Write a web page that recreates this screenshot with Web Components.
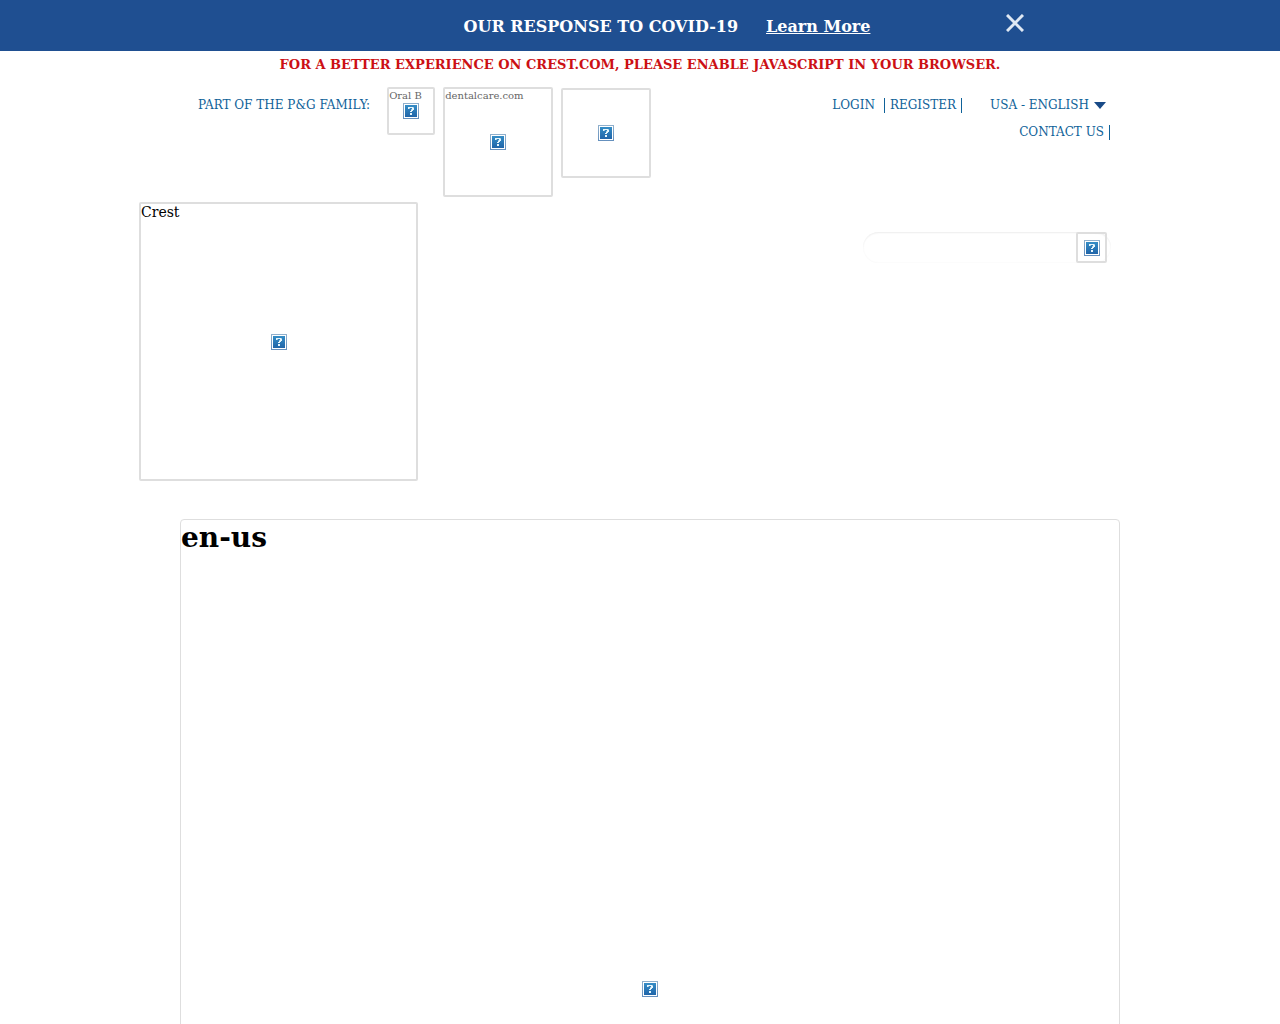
<!DOCTYPE html>
<html lang="en-US">
<head>
<meta charset="utf-8">
<meta name="viewport" content="width=device-width, initial-scale=1">
<title>Crest</title>
<style>
body { margin: 0; background: #fff; color: #000; font-family: "DejaVu Serif", serif; }
</style>
</head>
<body>
<crest-page></crest-page>
<script>
const define = (name, html) => {
  const template = document.createElement('template');
  template.innerHTML = html;
  customElements.define(name, class extends HTMLElement {
    constructor() {
      super();
      this.attachShadow({ mode: 'open' }).append(template.content.cloneNode(true));
    }
  });
};

/* Bordered image frame with a question-mark icon at its centre. */
define('image-frame', `
<style>
:host { display: grid; box-sizing: border-box; width: var(--size, 90px); aspect-ratio: 1; border: 2px solid #dedede; border-radius: 2px; font-size: 10px; line-height: 14px; color: #666; }
.alt, svg { grid-area: 1 / 1; }
.alt { justify-self: start; align-self: start; white-space: nowrap; }
svg { place-self: center; width: 16px; height: 16px; }
</style>
<span class="alt"><slot></slot></span>
<svg viewBox="0 0 16 16" aria-hidden="true">
  <defs><linearGradient id="g" x1="0" y1="0" x2="0" y2="1"><stop stop-color="#358dc6"/><stop offset="1" stop-color="#2065a9"/></linearGradient>
  <linearGradient id="b" x1="0" y1="0" x2="0" y2="1"><stop stop-color="#91b1cd"/><stop offset="1" stop-color="#648fbd"/></linearGradient></defs>
  <rect width="16" height="16" fill="url(#b)"/><rect x="1" y="1" width="14" height="14" fill="#fff"/><rect x="2" y="2" width="12" height="12" fill="url(#g)"/>
  <path d="M5 4H6V6H5ZM6 4H10V5H6ZM9 5H11V7H9ZM8 7H10V8H8ZM7 8H9V9H7ZM7 10H9V12H7Z" fill="#e6f5fb"/>
  <path d="M6 5H7V6H6ZM8 6H9V7H8ZM10 4H11V5H10Z" fill="#9fcae3"/>
</svg>`);

define('notice-bar', `
<style>
:host { display: block; background: #1f4f91; color: #fff; font-weight: bold; font-size: 16px; line-height: 21px; }
.row { display: grid; grid-template-columns: 1fr auto 1fr; max-width: 768px; margin: 0 auto; align-items: start; padding: 14px 0 16px; }
.message { grid-column: 2; display: flex; gap: 28px; padding: 2px 0 0 54px; margin-bottom: -2px; }
p { margin: 0; white-space: nowrap; }
a { color: inherit; white-space: nowrap; }
button { display: block; justify-self: end; padding: 0; border: 0; background: none; width: 18px; height: 18px; color: #dfe8f3; }
svg { display: block; }
</style>
<div class="row"><div class="message"><p>OUR RESPONSE TO COVID-19</p><a href="#covid">Learn More</a></div>
<button aria-label="Close"><svg width="18" height="18" viewBox="0 0 18 18"><path d="M1 1L17 17M17 1L1 17" stroke="currentColor" stroke-width="3" fill="none"/></svg></button></div>`);

define('script-warning', `
<style>
:host { display: block; padding: 5px 0 6px; text-align: center; color: #cc1014; font-weight: bold; font-size: 13px; line-height: 17px; }
</style>
<slot></slot>`);

define('brand-family', `
<style>
:host { display: flex; align-items: flex-start; gap: 8px; color: #0f6299; }
p { margin: 17px 9px 0 0; font-size: 12px; line-height: 18px; white-space: nowrap; }
a { display: block; margin-top: 8px; text-decoration: none; }
.parent { margin-top: 9px; }
</style>
<p>PART OF THE P&amp;G FAMILY:</p>
<a href="#oralb"><image-frame style="--size:48px">Oral B</image-frame></a>
<a href="#dentalcare"><image-frame style="--size:110px">dentalcare.com</image-frame></a>
<a class="parent" href="#pg" aria-label="P&amp;G"><image-frame style="--size:90px"></image-frame></a>`);

define('account-links', `
<style>
:host { display: flex; flex-direction: column; align-items: flex-end; gap: 12px; font-size: 12px; line-height: 15px; color: #0f6299; }
.row { display: flex; }
a, button { display: block; font: inherit; color: inherit; text-decoration: none; white-space: nowrap; padding: 0; border: 0; background: none; }
.bar { border-right: 1px solid #0f6299; padding-right: 5px; }
.login { padding-right: 9px; }
.register { padding-left: 5px; }
.locale { display: flex; align-items: center; gap: 5px; margin: 0 4px 0 28px; }
svg { display: block; }
</style>
<div class="row"><a class="bar login" href="#login">LOGIN</a><a class="bar register" href="#register">REGISTER</a>
<button class="locale">USA - ENGLISH<svg width="12" height="7" viewBox="0 0 12 7" aria-hidden="true"><path d="M0 0H12L6 7Z" fill="#184a87"/></svg></button></div>
<a class="bar" href="#contact">CONTACT US</a>`);

define('site-search', `
<style>
:host { display: block; }
form { display: flex; align-items: center; box-sizing: border-box; width: 248px; height: 31px; padding: 0 4px 0 12px; border-radius: 16px; box-shadow: inset 0 2px 2px -1px #eee, inset 0 0 2px #f2f2f2; }
input { flex: 1; min-width: 0; border: 0; padding: 0; background: none; font: inherit; outline: 0; }
button { padding: 0; border: 0; background: none; display: block; }
</style>
<form><input type="search" aria-label="Search"><button type="button" aria-label="Search"><image-frame style="--size:31px"></image-frame></button></form>`);

define('hero-banner', `
<style>
:host { display: block; box-sizing: border-box; aspect-ratio: 1; margin: 38px 20px 0 40px; border: 1px solid #dedede; border-radius: 4px; }
image-frame { width: 100%; height: 100%; aspect-ratio: auto; border: 0; color: #000; }
h1 { margin: 0; font-size: 28px; line-height: 36px; }
</style>
<image-frame><h1>en-us</h1></image-frame>`);

define('crest-page', `
<style>
:host { display: block; }
main, header { max-width: 1002px; margin: 0 auto; }
.utility { display: flex; justify-content: space-between; align-items: flex-start; padding: 0 31px 0 59px; }
account-links { margin-top: 19px; }
.mast { display: flex; justify-content: space-between; align-items: flex-start; padding: 5px 30px 0 0; }
.mast a { display: block; text-decoration: none; }
.mast image-frame { font-size: 14px; line-height: 16px; color: #000; }
site-search { margin-top: 30px; }
main { max-width: 1000px; }
</style>
<notice-bar></notice-bar>
<script-warning>FOR A BETTER EXPERIENCE ON CREST.COM, PLEASE ENABLE JAVASCRIPT IN YOUR BROWSER.</script-warning>
<header>
<div class="utility"><brand-family></brand-family><account-links></account-links></div>
<div class="mast"><a href="#home"><image-frame style="--size:279px">Crest</image-frame></a><site-search></site-search></div>
</header>
<main><hero-banner></hero-banner></main>`);
</script>
</body>
</html>
